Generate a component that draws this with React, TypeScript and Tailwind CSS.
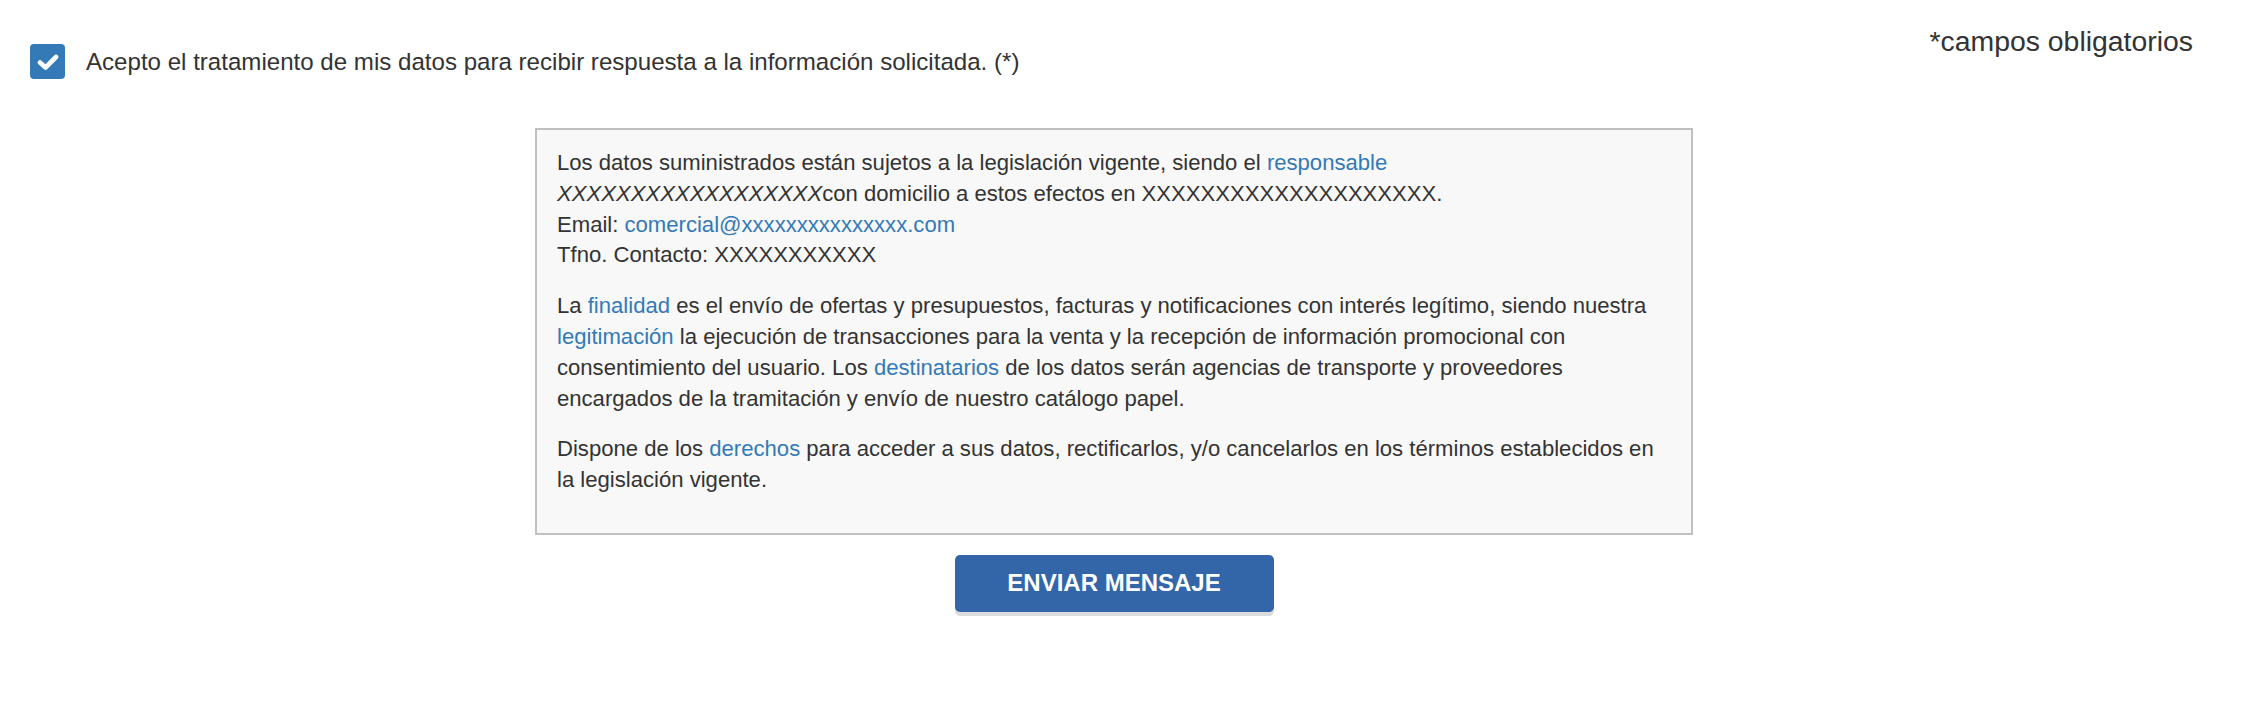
import React from "react";

const link = "text-[#337ab7]";

export default function App() {
  return (
    <div className="w-[2250px] h-[708px] bg-white text-[#333333] font-['Liberation_Sans',Arial,sans-serif] overflow-hidden">
      <div className="flex items-start justify-between pl-[30px] pr-[57px]">
        <label className="mt-[44px] flex items-center gap-[21px]">
          <span className="flex h-[35px] w-[35px] items-center justify-center rounded-[4px] bg-[#337ab7]">
            <svg width="22" height="18" viewBox="0 0 22 18" fill="none">
              <path d="M3 9.5 L8.5 14.5 L19 4" stroke="white" strokeWidth="4.6" strokeLinecap="round" strokeLinejoin="round" />
            </svg>
          </span>
          <span className="text-[24.1px] leading-[28px]">
            Acepto el tratamiento de mis datos para recibir respuesta a la información solicitada. (*)
          </span>
        </label>
        <div className="mt-[25px] text-[28.4px] leading-[32px]">*campos obligatorios</div>
      </div>

      <div className="flex flex-col items-center pr-[22px]">
        <div className="mt-[49px] w-[1158px] border-2 border-[#c0c0c0] bg-[#f8f8f8] px-[20px] pt-[18px] pb-[17px] text-[22.1px] leading-[30.8px] whitespace-nowrap">
          <p className="mb-[20px]">
            Los datos suministrados están sujetos a la legislación vigente, siendo el <a className={link}>responsable</a>
            <br />
            <i>XXXXXXXXXXXXXXXXXX</i>con domicilio a estos efectos en XXXXXXXXXXXXXXXXXXXX.
            <br />
            Email: <a className={link}>comercial@xxxxxxxxxxxxxxx.com</a>
            <br />
            Tfno. Contacto: XXXXXXXXXXX
          </p>
          <p className="mb-[20px]">
            La <a className={link}>finalidad</a> es el envío de ofertas y presupuestos, facturas y notificaciones con interés legítimo, siendo nuestra
            <br />
            <a className={link}>legitimación</a> la ejecución de transacciones para la venta y la recepción de información promocional con
            <br />
            consentimiento del usuario. Los <a className={link}>destinatarios</a> de los datos serán agencias de transporte y proveedores
            <br />
            encargados de la tramitación y envío de nuestro catálogo papel.
          </p>
          <p className="mb-[20px]">
            Dispone de los <a className={link}>derechos</a> para acceder a sus datos, rectificarlos, y/o cancelarlos en los términos establecidos en
            <br />
            la legislación vigente.
          </p>
        </div>
        <button className="mt-[20px] h-[57px] w-[319px] rounded-[5px] bg-[#3365a9] text-[24px] font-bold text-white shadow-[0_4px_0_#dcdcdc]">
          ENVIAR MENSAJE
        </button>
      </div>
    </div>
  );
}
